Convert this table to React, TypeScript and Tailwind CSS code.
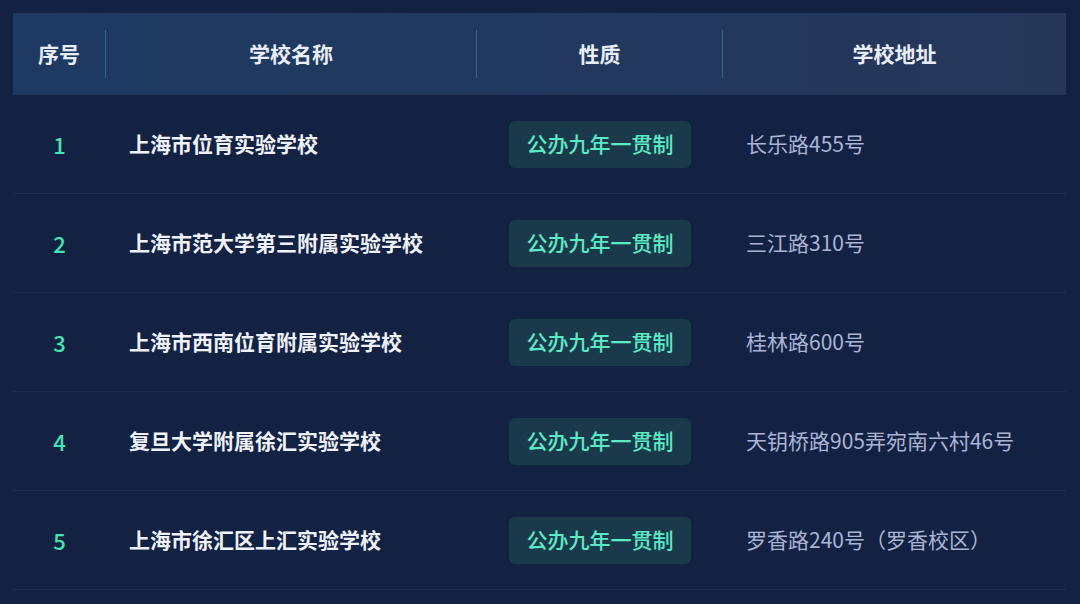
import React from 'react'

type School = {
    id: number
    name: string
    kind: string
    address: string
}

const schools: School[] = [
    { id: 1, name: '上海市位育实验学校', kind: '公办九年一贯制', address: '长乐路455号' },
    { id: 2, name: '上海市范大学第三附属实验学校', kind: '公办九年一贯制', address: '三江路310号' },
    { id: 3, name: '上海市西南位育附属实验学校', kind: '公办九年一贯制', address: '桂林路600号' },
    { id: 4, name: '复旦大学附属徐汇实验学校', kind: '公办九年一贯制', address: '天钥桥路905弄宛南六村46号' },
    { id: 5, name: '上海市徐汇区上汇实验学校', kind: '公办九年一贯制', address: '罗香路240号（罗香校区）' },
]

function Divider() {
    return <div className='h-12 w-px shrink-0 bg-[#2d6a82]' />
}

function App() {
    return (
        <div
            className='h-[604px] w-[1080px] overflow-hidden bg-[#132142] pt-[13px] pl-[13px]'
            style={{ fontFamily: '"Noto Sans CJK SC", "Noto Sans", sans-serif' }}
        >
            <div className='w-[1053px]'>
                {/* header */}
                <div className='flex h-[82px] items-center bg-linear-to-r from-[#1e3a62] to-[#253659] text-[21px] font-bold text-[#e8eef8]'>
                    <div className='w-[92px] text-center'>序号</div>
                    <Divider />
                    <div className='w-[370px] text-center'>学校名称</div>
                    <Divider />
                    <div className='w-[245px] text-center'>性质</div>
                    <Divider />
                    <div className='flex-1 text-center'>学校地址</div>
                </div>

                {/* rows */}
                {schools.map(s => (
                    <div
                        key={s.id}
                        className='grid h-[99px] grid-cols-[93px_371px_246px_343px] items-center border-b border-[#1d2d4d]'
                    >
                        <div className='text-center text-[22px] font-medium text-[#45e3b6]'>{s.id}</div>
                        <div className='pl-[23px] text-[21px] font-bold text-[#eef2fa]'>{s.name}</div>
                        <div className='flex justify-center'>
                            <span className='flex h-[47px] w-[182px] items-center justify-center rounded-md bg-[#1a3a4c] text-[21px] font-medium text-[#5ceac6]'>
                                {s.kind}
                            </span>
                        </div>
                        <div className='pl-[23px] text-[21px] text-[#aab5d5]'>{s.address}</div>
                    </div>
                ))}
            </div>
        </div>
    )
}

export default App
